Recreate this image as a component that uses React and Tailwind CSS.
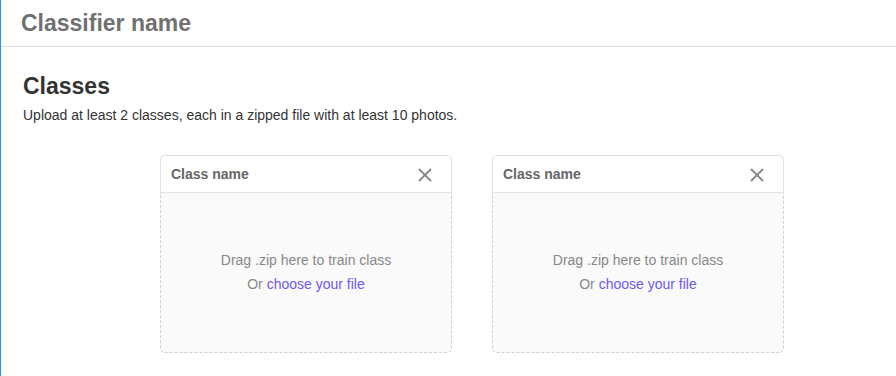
import { X } from 'lucide-react'

function ClassCard() {
  return (
    <div className="w-[292px] flex flex-col">
      <div className="h-[38px] flex items-center justify-between pl-[10px] pr-[15px] pt-[1px] border border-[#e2e2e2] rounded-t-[5px] bg-white">
        <span className="text-[14px] font-bold text-[#666]">Class name</span>
        <X className="w-[22px] h-[22px] text-[#888]" strokeWidth={2} />
      </div>
      <div className="h-[160px] flex flex-col items-center justify-center gap-[3px] border border-t-0 border-dashed border-[#cfcfcf] rounded-b-[5px] bg-[#fafafa] text-[14px] text-[#888]">
        <p>Drag .zip here to train class</p>
        <p>
          Or <a href="#" className="text-[#7058f0]">choose your file</a>
        </p>
      </div>
    </div>
  )
}

export default function App() {
  return (
    <div className="w-[896px] h-[376px] bg-white border-l border-[#2196f3] font-['Liberation_Sans',Arial,sans-serif] overflow-hidden">
      <div className="h-[47px] flex items-center pl-[20px] border-b border-[#dcdcdc]">
        <h1 className="text-[23px] font-bold text-[#707070]">Classifier name</h1>
      </div>
      <div className="pl-[22px] pt-[24px]">
        <h2 className="text-[23px] font-bold text-[#333] leading-[30px]">Classes</h2>
        <p className="mt-[4px] text-[14px] text-[#333]">Upload at least 2 classes, each in a zipped file with at least 10 photos.</p>
      </div>
      <div className="flex gap-[40px] pl-[159px] mt-[29px]">
        <ClassCard />
        <ClassCard />
      </div>
    </div>
  )
}
